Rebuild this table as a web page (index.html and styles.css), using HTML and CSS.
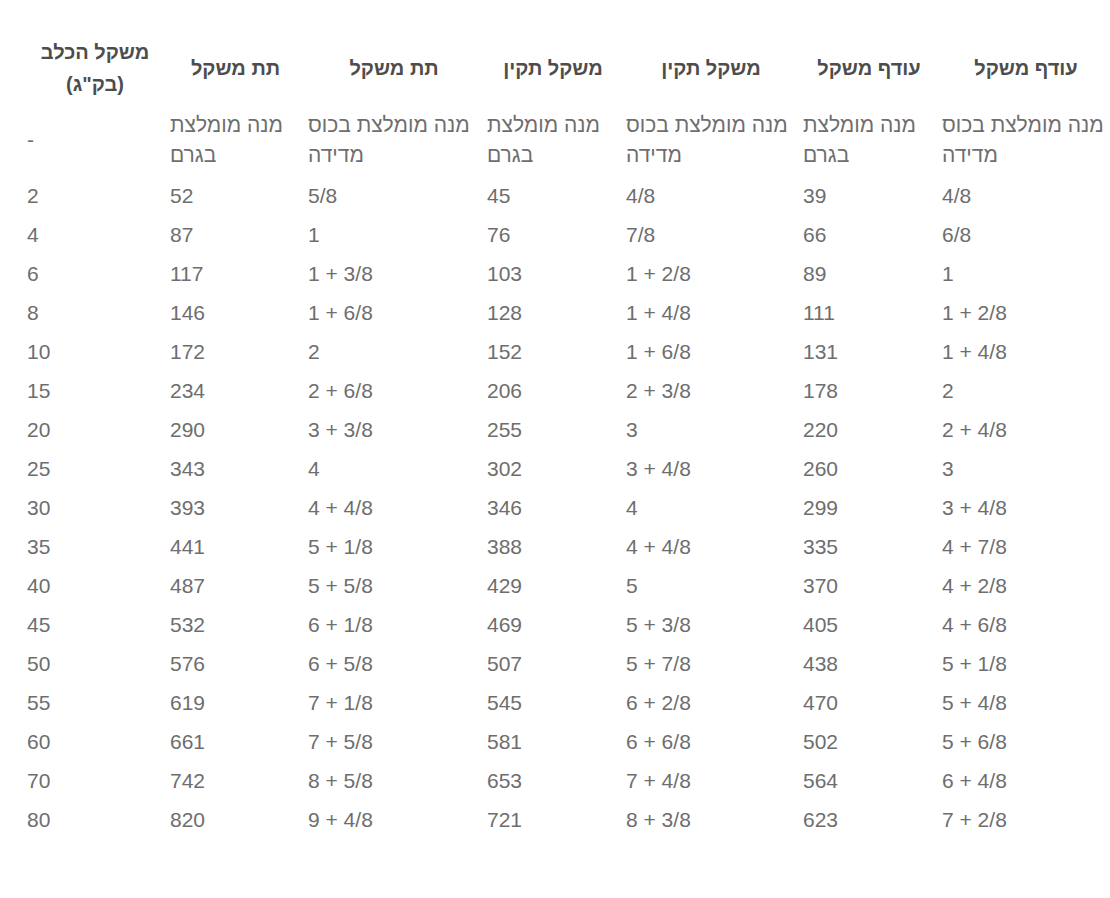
FILE: index.html
```html
<!DOCTYPE html>
<html lang="he">
<head>
<meta charset="utf-8">
<title>טבלת מנות</title>
<link rel="stylesheet" href="styles.css">
</head>
<body>
<table class="feed">
  <colgroup>
    <col class="c1"><col class="c2"><col class="c3"><col class="c4"><col class="c5"><col class="c6"><col class="c7">
  </colgroup>
  <thead>
    <tr class="head">
      <th>משקל הכלב (בק"ג)</th>
      <th>תת משקל</th>
      <th>תת משקל</th>
      <th>משקל תקין</th>
      <th>משקל תקין</th>
      <th>עודף משקל</th>
      <th>עודף משקל</th>
    </tr>
  </thead>
  <tbody>
    <tr class="sub">
      <td class="dash">-</td>
      <td>מנה מומלצת בגרם</td>
      <td>מנה מומלצת בכוס מדידה</td>
      <td>מנה מומלצת בגרם</td>
      <td>מנה מומלצת בכוס מדידה</td>
      <td>מנה מומלצת בגרם</td>
      <td>מנה מומלצת בכוס מדידה</td>
    </tr>
    <tr><td>2</td><td>52</td><td>5/8</td><td>45</td><td>4/8</td><td>39</td><td>4/8</td></tr>
    <tr><td>4</td><td>87</td><td>1</td><td>76</td><td>7/8</td><td>66</td><td>6/8</td></tr>
    <tr><td>6</td><td>117</td><td>1 + 3/8</td><td>103</td><td>1 + 2/8</td><td>89</td><td>1</td></tr>
    <tr><td>8</td><td>146</td><td>1 + 6/8</td><td>128</td><td>1 + 4/8</td><td>111</td><td>1 + 2/8</td></tr>
    <tr><td>10</td><td>172</td><td>2</td><td>152</td><td>1 + 6/8</td><td>131</td><td>1 + 4/8</td></tr>
    <tr><td>15</td><td>234</td><td>2 + 6/8</td><td>206</td><td>2 + 3/8</td><td>178</td><td>2</td></tr>
    <tr><td>20</td><td>290</td><td>3 + 3/8</td><td>255</td><td>3</td><td>220</td><td>2 + 4/8</td></tr>
    <tr><td>25</td><td>343</td><td>4</td><td>302</td><td>3 + 4/8</td><td>260</td><td>3</td></tr>
    <tr><td>30</td><td>393</td><td>4 + 4/8</td><td>346</td><td>4</td><td>299</td><td>3 + 4/8</td></tr>
    <tr><td>35</td><td>441</td><td>5 + 1/8</td><td>388</td><td>4 + 4/8</td><td>335</td><td>4 + 7/8</td></tr>
    <tr><td>40</td><td>487</td><td>5 + 5/8</td><td>429</td><td>5</td><td>370</td><td>4 + 2/8</td></tr>
    <tr><td>45</td><td>532</td><td>6 + 1/8</td><td>469</td><td>5 + 3/8</td><td>405</td><td>4 + 6/8</td></tr>
    <tr><td>50</td><td>576</td><td>6 + 5/8</td><td>507</td><td>5 + 7/8</td><td>438</td><td>5 + 1/8</td></tr>
    <tr><td>55</td><td>619</td><td>7 + 1/8</td><td>545</td><td>6 + 2/8</td><td>470</td><td>5 + 4/8</td></tr>
    <tr><td>60</td><td>661</td><td>7 + 5/8</td><td>581</td><td>6 + 6/8</td><td>502</td><td>5 + 6/8</td></tr>
    <tr><td>70</td><td>742</td><td>8 + 5/8</td><td>653</td><td>7 + 4/8</td><td>564</td><td>6 + 4/8</td></tr>
    <tr><td>80</td><td>820</td><td>9 + 4/8</td><td>721</td><td>8 + 3/8</td><td>623</td><td>7 + 2/8</td></tr>
  </tbody>
</table>
</body>
</html>
```

FILE: styles.css
```css
html, body {
  margin: 0;
  padding: 0;
  background: #ffffff;
}

body {
  font-family: "Liberation Sans", "DejaVu Sans", Arial, sans-serif;
}

.feed {
  margin: 30px 0 0 20px;
  width: 1090px;
  table-layout: fixed;
  border-collapse: collapse;
  border-spacing: 0;
}

.c1 { width: 143px; }
.c2 { width: 138px; }
.c3 { width: 179px; }
.c4 { width: 139px; }
.c5 { width: 177px; }
.c6 { width: 139px; }
.c7 { width: 175px; }

.feed th {
  font-size: 20px;
  font-weight: bold;
  line-height: 32px;
  color: #4d4d4d;
  text-align: center;
  vertical-align: middle;
  padding: 6px 0 5px 7px;
}

.feed td {
  font-size: 21px;
  line-height: 30px;
  color: #6e6e6e;
  text-align: left;
  vertical-align: middle;
  padding: 5px 0 4px 7px;
}

.sub td {
  padding-bottom: 6px;
}

.dash {
  color: #9a9a9a;
}
```
